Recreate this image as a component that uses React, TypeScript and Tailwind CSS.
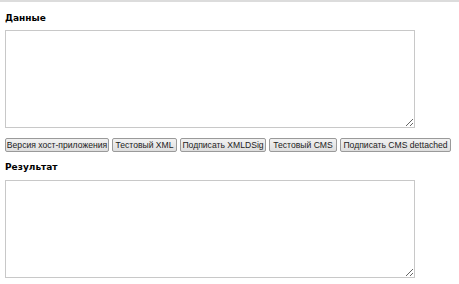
const buttons = [
  { label: "Версия хост-приложения", w: "w-[104px]" },
  { label: "Тестовый XML", w: "w-[65px]" },
  { label: "Подписать XMLDSig", w: "w-[86px]" },
  { label: "Тестовый CMS", w: "w-[68px]" },
  { label: "Подписать CMS dettached", w: "w-[111px]" },
];

function Field() {
  return (
    <textarea className="block w-[410px] h-[98px] ml-[5px] border border-[#c8c8c8] bg-white resize-y outline-none" />
  );
}

export default function App() {
  return (
    <div className="w-[459px] h-[284px] bg-white border-t-2 border-[#dcdcdc] overflow-hidden">
      <h3 className="ml-[5px] mt-[10px] text-[9px] leading-[12px] font-bold text-black [font-family:'DejaVu_Sans',sans-serif]">
        Данные
      </h3>
      <div className="mt-[6px]">
        <Field />
      </div>
      <div className="flex gap-[3px] ml-[5px] mt-[10px]">
        {buttons.map((b) => (
          <button
            key={b.label}
            className={`${b.w} shrink-0 h-[14px] px-0 text-[8.6px] leading-[12px] text-[#222] bg-[linear-gradient(#f2f2f2,#dedede)] border border-[#9a9a9a] rounded-[2px] whitespace-nowrap text-center [font-family:'Liberation_Sans',Arial,sans-serif]`}
          >
            {b.label}
          </button>
        ))}
      </div>
      <h3 className="ml-[5px] mt-[9px] text-[9px] leading-[12px] font-bold text-black [font-family:'DejaVu_Sans',sans-serif]">
        Результат
      </h3>
      <div className="mt-[7px]">
        <Field />
      </div>
    </div>
  );
}
